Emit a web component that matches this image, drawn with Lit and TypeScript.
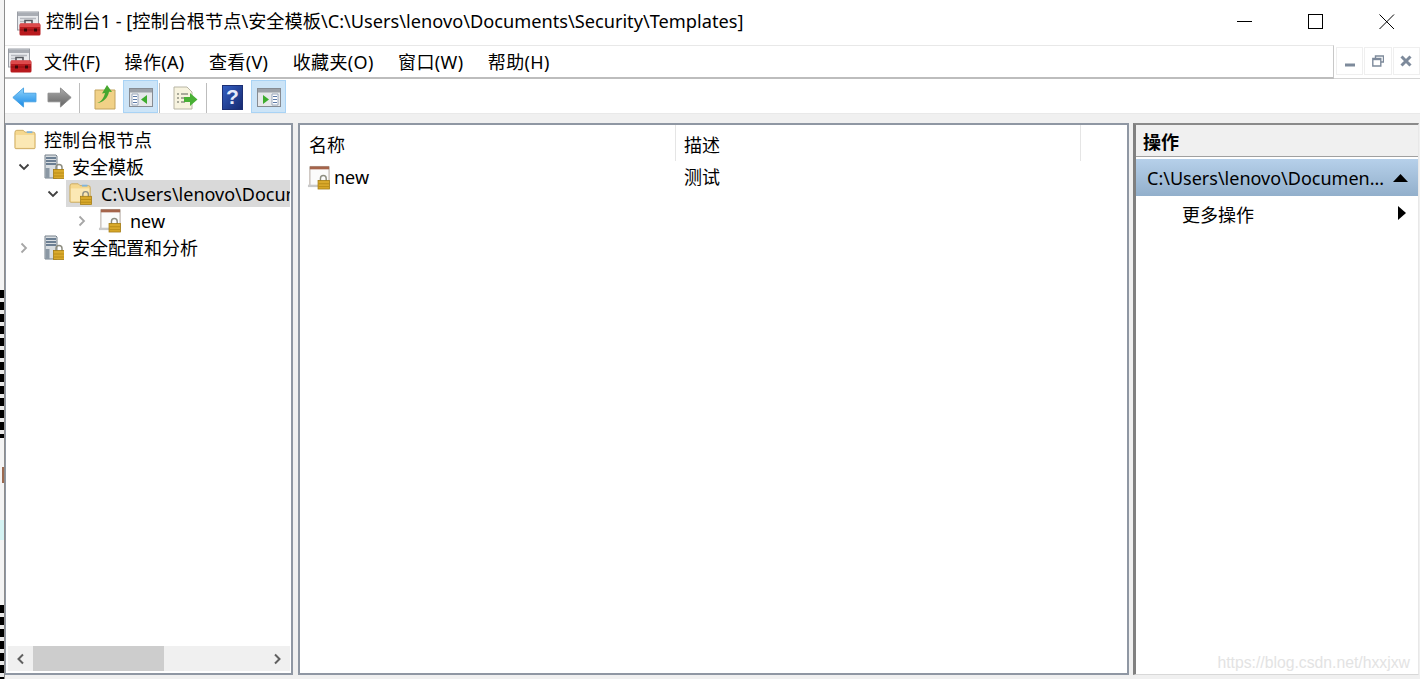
import { LitElement, css, html, svg } from 'lit';
import { customElement } from 'lit/decorators.js';

const toolbox = svg`
  <rect x="0.5" y="0.5" width="21" height="18" fill="#e9ebee" stroke="#9a9ea5"/>
  <rect x="1" y="1" width="20" height="3.5" fill="#a9adb4"/>
  <path d="M3 7h16M3 10h5M3 13h5" stroke="#b6b9bf" stroke-width="1.5"/>
  <path d="M8 12V9h7v3" fill="none" stroke="#55585e" stroke-width="1.6"/>
  <rect x="2.5" y="12" width="21" height="12" rx="1.5" fill="#b81a1e"/>
  <rect x="3" y="12" width="20" height="3.5" fill="#dd4a4c"/>
  <rect x="3" y="18" width="20" height="1" fill="#8e0f13"/>
  <rect x="7" y="17" width="3" height="3" fill="#3b0a0a"/>
  <rect x="17" y="17" width="3" height="3" fill="#3b0a0a"/>
`;

const lock = (x: number, y: number) => svg`
  <g transform="translate(${x} ${y})">
    <path d="M3 6.5V3.5a3 3 0 0 1 6 0V6.5" fill="none" stroke="#8d8d80" stroke-width="1.5"/>
    <rect x="0.5" y="5.5" width="12" height="9" fill="#d9a92b" stroke="#a27a12" stroke-width="0.8"/>
    <path d="M1 9h11M1 12h11" stroke="#b98c18"/>
  </g>
`;

const folderShape = svg`
  <path d="M1 21V4.5Q1 2 3 2h7l2 2h9q2 0 2 2v15q0 1-1 1H2q-1 0-1-1z" fill="#f6d88e" stroke="#c9a95f"/>
  <path d="M2 7h20v14H2z" fill="#fbe8b4"/>
  <rect x="14" y="3" width="6" height="2" fill="#7fb4dc"/>
`;

const server = svg`
  <g>
    <path d="M1 1h11l1 1v22H1z" fill="#d8dde1" stroke="#76818b"/>
    <path d="M2 4h10M2 7h10M2 10h10" stroke="#48607a" stroke-width="1.5"/>
    <path d="M1.5 14h4v10h-4z" fill="#8b98a4"/>
    ${lock(9, 10)}
  </g>
`;

const template = svg`
  <g>
    <path d="M3 1h20v20H3z" fill="#fbfbfb" stroke="#b0a49c"/>
    <path d="M3 1h20v3H3z" fill="#a5644a"/>
    <path d="M1 20h12v2.5H1z" fill="#c9c9c9"/>
    ${lock(11, 10)}
  </g>
`;

const panelIcon = (dir: 'left' | 'right') => svg`
  <rect x="0.5" y="0.5" width="23" height="18" fill="#e6e8ea" stroke="#868b92"/>
  <rect x="1" y="1" width="22" height="3.5" fill="#9ca1a8"/>
  ${dir === 'left'
    ? svg`<path d="M3 6h6v11H3z" fill="#fff" stroke="#9aa8bb"/><path d="M4 8.5h4M4 11.5h4M4 14.5h4" stroke="#5c7aa8"/><path d="M18 7v9l-6-4.5z" fill="#3dac2e"/>`
    : svg`<path d="M15 6h6v11h-6z" fill="#fff" stroke="#9aa8bb"/><path d="M16 8.5h4M16 11.5h4M16 14.5h4" stroke="#5c7aa8"/><path d="M6 7v9l6-4.5z" fill="#3dac2e"/>`}
`;

const treeRows = [
  { depth: 0, twist: '', icon: 'folder', label: '控制台根节点' },
  { depth: 1, twist: 'open', icon: 'server', label: '安全模板' },
  { depth: 2, twist: 'open', icon: 'lockfolder', label: 'C:\\Users\\lenovo\\Documents', selected: true },
  { depth: 3, twist: 'closed', icon: 'template', label: 'new' },
  { depth: 1, twist: 'closed', icon: 'server', label: '安全配置和分析' },
];

@customElement('app-root')
export class AppRoot extends LitElement {
  private _rowIcon(name: string) {
    if (name === 'folder') return html`<svg class="ico" viewBox="0 0 24 24">${folderShape}</svg>`;
    if (name === 'server') return html`<svg class="ico" viewBox="-4 0 24 25">${server}</svg>`;
    if (name === 'lockfolder') return html`<svg class="ico" viewBox="0 0 26 25">${folderShape}${lock(12, 10)}</svg>`;
    return html`<svg class="ico" viewBox="0 0 25 25">${template}</svg>`;
  }

  private _twist(kind: string) {
    if (kind === 'open') {
      return html`<svg class="twist" viewBox="0 0 12 12"><path d="M1.5 3.5 6 8l4.5-4.5" fill="none" stroke="#404040" stroke-width="1.8"/></svg>`;
    }
    if (kind === 'closed') {
      return html`<svg class="twist" viewBox="0 0 12 12"><path d="M3.5 1.5 8 6l-4.5 4.5" fill="none" stroke="#a6a6a6" stroke-width="1.8"/></svg>`;
    }
    return html``;
  }

  render() {
    return html`
      <div class="strip"></div>
      <div class="window">
        <div class="titlebar">
          <svg class="title-icon" viewBox="0 0 24 24">${toolbox}</svg>
          <span class="title-text">控制台1 - [控制台根节点\\安全模板\\C:\\Users\\lenovo\\Documents\\Security\\Templates]</span>
          <div class="caption">
            <svg viewBox="0 0 16 16"><path d="M0 7.5h15" stroke="#000"/></svg>
            <svg viewBox="0 0 16 16"><rect x="0.5" y="0.5" width="14" height="14" fill="none" stroke="#000"/></svg>
            <svg viewBox="0 0 16 16"><path d="M.5.5l14.5 14.5M15 .5.5 15" stroke="#000" fill="none"/></svg>
          </div>
        </div>

        <div class="menu-row">
          <div class="menubar">
            <svg class="menu-icon" viewBox="0 0 24 24">${toolbox}</svg>
            <span class="mi first">文件(F)</span>
            <span class="mi">操作(A)</span>
            <span class="mi">查看(V)</span>
            <span class="mi">收藏夹(O)</span>
            <span class="mi">窗口(W)</span>
            <span class="mi">帮助(H)</span>
          </div>
          <div class="mdi">
            <span class="mdi-btn"><svg viewBox="0 0 12 12"><path d="M1 10h10" stroke="#7d8a9b" stroke-width="3"/></svg></span>
            <span class="mdi-btn"><svg viewBox="0 0 12 12"><path d="M3.5 3V1h8v6H9M.8 3.5h8V11H.8z" fill="none" stroke="#7d8a9b" stroke-width="1.4"/><path d="M1 4.2h8" stroke="#7d8a9b" stroke-width="2"/></svg></span>
            <span class="mdi-btn"><svg viewBox="0 0 12 12"><path d="M1.5 1.5l9 9M10.5 1.5l-9 9" stroke="#7d8a9b" stroke-width="3"/></svg></span>
          </div>
        </div>

        <div class="toolbar">
          <svg class="arrow" viewBox="0 0 26 22">
            <defs><linearGradient id="blue" x1="0" y1="0" x2="0" y2="1"><stop offset="0" stop-color="#93d6fc"/><stop offset="1" stop-color="#1587e6"/></linearGradient></defs>
            <path d="M0.8 11 12 1v5.5h13v9H12V21z" fill="url(#blue)" stroke="#47a2e2"/>
          </svg>
          <svg class="arrow fwd" viewBox="0 0 26 22">
            <defs><linearGradient id="gray" x1="0" y1="0" x2="0" y2="1"><stop offset="0" stop-color="#ababab"/><stop offset="1" stop-color="#636363"/></linearGradient></defs>
            <path d="M25.2 11 14 1v5.5H1v9h13V21z" fill="url(#gray)" stroke="#8a8a8a"/>
          </svg>
          <span class="sep s1"></span>
          <svg class="up" viewBox="0 0 22 26">
            <path d="M1 6h20v19H1z" fill="#f1d187" stroke="#c3a35c"/>
            <path d="M3 19c4-1 7-5 8-10l-3 .5L13 1l5 7-3-.2c-1 6-6 11-12 11.2z" fill="#47a72f"/>
          </svg>
          <span class="tb-active a1"><svg class="panel" viewBox="0 0 24 19">${panelIcon('left')}</svg></span>
          <span class="sep s2"></span>
          <svg class="doc" viewBox="0 0 25 24">
            <path d="M1 1h13l5 5v17H1z" fill="#f7f3df" stroke="#b8b5a4"/>
            <path d="M4 8h2M8 8h7M4 12h2M8 12h4M4 16h2M8 16h4" stroke="#5f6358" stroke-width="1.2"/>
            <path d="M11 11h6V7l7.5 6.5L17 20v-4h-6z" fill="#49b035"/>
          </svg>
          <span class="sep s3"></span>
          <svg class="help" viewBox="0 0 21 25">
            <defs><linearGradient id="hb" x1="0" y1="0" x2="1" y2="1"><stop offset="0" stop-color="#3460c4"/><stop offset="1" stop-color="#16286e"/></linearGradient></defs>
            <rect x="0.5" y="0.5" width="20" height="24" fill="url(#hb)" stroke="#1c2f74"/>
            <text x="10.5" y="19" text-anchor="middle" class="q">?</text>
          </svg>
          <span class="tb-active a2"><svg class="panel" viewBox="0 0 24 19">${panelIcon('right')}</svg></span>
        </div>

        <div class="panes">
          <section class="pane tree">
            <div class="tree-body">
              ${treeRows.map(
                (r) => html`
                  <div class="row ${r.depth === 0 ? 'root' : ''}" style="padding-left:${r.depth === 0 ? 5 : (r.depth - 1) * 29 + 12}px">
                    ${this._twist(r.twist)}
                    <span class="cell ${r.selected ? 'sel' : ''}">
                      ${this._rowIcon(r.icon)}
                      <span class="lbl">${r.label}</span>
                    </span>
                  </div>
                `,
              )}
            </div>
            <div class="hscroll">
              <svg class="sarrow" viewBox="0 0 10 12"><path d="M7.5 1.5 3 6l4.5 4.5" fill="none" stroke="#606060" stroke-width="2"/></svg>
              <div class="track"><div class="thumb"></div></div>
              <svg class="sarrow" viewBox="0 0 10 12"><path d="M2.5 1.5 7 6l-4.5 4.5" fill="none" stroke="#606060" stroke-width="2"/></svg>
            </div>
          </section>

          <section class="pane list">
            <div class="list-head">
              <span class="col c1">名称</span>
              <span class="col c2">描述</span>
            </div>
            <div class="list-row">
              <div class="c1 name-cell"><svg class="ico" viewBox="0 0 25 25">${template}</svg><span>new</span></div>
              <div class="c2">测试</div>
            </div>
          </section>

          <section class="pane actions">
            <div class="act-head">操作</div>
            <div class="act-group">
              <span>C:\\Users\\lenovo\\Documen...</span>
              <svg class="tri-up" viewBox="0 0 15 8"><path d="M0 8 7.5 0 15 8z" fill="#000"/></svg>
            </div>
            <div class="act-item">
              <span>更多操作</span>
              <svg class="tri-right" viewBox="0 0 8 14"><path d="M0 0l8 7-8 7z" fill="#000"/></svg>
            </div>
            <div class="watermark">https://blog.csdn.net/hxxjxw</div>
          </section>
        </div>
      </div>
    `;
  }

  static styles = css`
    :host {
      display: flex;
      width: 1420px;
      height: 679px;
      overflow: hidden;
      background: #fff;
      color: #000;
      font-family: 'Noto Sans', 'Noto Sans CJK SC', sans-serif;
      font-size: 18px;
      line-height: 24px;
    }
    .strip {
      width: 4px;
      flex: none;
      background:
        repeating-linear-gradient(#000 0 8px, #e8e8e8 8px 12px) 0 290px / 4px 148px no-repeat,
        linear-gradient(#9c6a50, #9c6a50) 2px 467px / 2px 16px no-repeat,
        linear-gradient(#d5f3f3, #d5f3f3) 0 520px / 4px 20px no-repeat,
        repeating-linear-gradient(#000 0 8px, #e8e8e8 8px 12px) 0 605px / 4px 74px no-repeat,
        #f4f4f4;
    }
    .window {
      flex: 1;
      min-width: 0;
      display: flex;
      flex-direction: column;
      border-left: 1px solid #8d8d8d;
    }

    .titlebar {
      height: 45px;
      flex: none;
      display: flex;
      align-items: center;
      padding-left: 12px;
      background: #fff;
    }
    .title-icon {
      width: 24px;
      height: 25px;
      margin-right: 5px;
      margin-top: 1px;
    }
    .title-text {
      font-size: 18.2px;
      white-space: nowrap;
      margin-top: -4px;
    }
    .caption {
      margin-left: auto;
      display: flex;
      align-items: center;
      gap: 55px;
      padding-right: 25px;
      margin-top: -1px;
    }
    .caption svg {
      width: 16px;
      height: 16px;
      display: block;
    }

    .menu-row {
      height: 34px;
      flex: none;
      display: flex;
    }
    .menubar {
      width: 1329px;
      display: flex;
      align-items: center;
      border-top: 1px solid #e8e8e8;
      border-right: 1px solid #c8c8c8;
      border-bottom: 2px solid #bdbdbd;
      padding-left: 3px;
      box-sizing: border-box;
    }
    .menu-icon {
      width: 24px;
      height: 25px;
      flex: none;
      margin-top: -2px;
    }
    .mi {
      margin-left: 24.4px;
      white-space: nowrap;
      letter-spacing: 0.35px;
    }
    .mi.first {
      margin-left: 12px;
      letter-spacing: 0;
    }
    .mdi {
      flex: 1;
      display: flex;
      gap: 1px;
      padding: 2px 0 3px 2px;
      border-bottom: 1px solid #d5d5d5;
    }
    .mdi-btn {
      flex: 1;
      display: flex;
      align-items: center;
      justify-content: center;
      border: 1px solid #efefef;
    }
    .mdi-btn svg {
      width: 12px;
      height: 12px;
    }

    .toolbar {
      height: 34px;
      flex: none;
      display: flex;
      align-items: center;
      padding-left: 7px;
      background: #fff;
    }
    .arrow {
      width: 25px;
      height: 21px;
      flex: none;
      margin-top: 3px;
    }
    .arrow.fwd {
      margin-left: 10px;
    }
    .sep {
      width: 1px;
      height: 30px;
      flex: none;
      margin-top: 3px;
      background: #bdbdbd;
    }
    .s1 {
      margin-left: 7px;
    }
    .s2 {
      margin-left: 1px;
    }
    .s3 {
      margin-left: 8px;
    }
    .up {
      width: 22px;
      height: 26px;
      margin-left: 14px;
      margin-top: 2px;
      flex: none;
    }
    .tb-active {
      width: 33px;
      height: 28px;
      flex: none;
      display: flex;
      align-items: center;
      justify-content: center;
      padding-top: 3px;
      background: #cce4f7;
      border: 1px solid #a9d3f5;
    }
    .a1 {
      margin-left: 7px;
    }
    .a2 {
      margin-left: 8px;
    }
    .panel {
      width: 24px;
      height: 19px;
    }
    .doc {
      width: 25px;
      height: 24px;
      margin-left: 13px;
      margin-top: 3px;
      flex: none;
    }
    .help {
      width: 21px;
      height: 25px;
      margin-left: 15px;
      margin-top: 3px;
      flex: none;
    }
    .q {
      font: bold 21px 'Liberation Sans', sans-serif;
      fill: #e6ebfb;
    }

    .panes {
      flex: 1;
      min-height: 0;
      display: flex;
      background: #f0f0f0;
      border-top: 1px solid #e9e9e9;
      padding: 9px 0 4px 0;
      gap: 5px;
    }
    .pane {
      box-sizing: border-box;
      background: #fff;
      border: 2px solid #8f97a3;
      min-width: 0;
      display: flex;
      flex-direction: column;
    }
    .tree {
      width: 288px;
      flex: none;
      border-left-width: 1px;
    }
    .tree-body {
      flex: 1;
      padding-top: 1px;
      overflow: hidden;
    }
    .row {
      height: 27px;
      display: flex;
      align-items: center;
      white-space: nowrap;
    }
    .twist {
      width: 12px;
      height: 12px;
      flex: none;
      margin-right: 7px;
    }
    .cell {
      flex: 1;
      min-width: 0;
      height: 27px;
      display: flex;
      align-items: center;
      overflow: hidden;
      margin-right: 1px;
      padding-left: 3px;
    }
    .cell.sel {
      background: #d9d9d9;
    }
    .ico {
      width: 24px;
      height: 25px;
      flex: none;
      margin-right: 8px;
    }
    .row.root .ico {
      width: 22px;
    }
    .lbl {
      white-space: nowrap;
    }
    .hscroll {
      height: 25px;
      flex: none;
      display: flex;
      align-items: center;
      background: #f0f0f0;
      margin: 0 1px 2px 2px;
    }
    .sarrow {
      width: 25px;
      height: 12px;
      flex: none;
    }
    .track {
      flex: 1;
      align-self: stretch;
    }
    .thumb {
      width: 131px;
      height: 100%;
      background: #cdcdcd;
    }

    .list {
      width: 831px;
      flex: none;
    }
    .list-head {
      height: 36px;
      flex: none;
      display: flex;
      align-items: center;
    }
    .col {
      height: 100%;
      display: flex;
      align-items: center;
      padding-top: 3px;
      border-right: 1px solid #e5e5e5;
    }
    .c1 {
      width: 376px;
      flex: none;
      padding-left: 9px;
      box-sizing: border-box;
    }
    .c2 {
      width: 405px;
      flex: none;
      padding-left: 8px;
      box-sizing: border-box;
    }
    .list-row {
      height: 32px;
      display: flex;
      align-items: center;
    }
    .name-cell {
      display: flex;
      align-items: center;
      padding-left: 7px;
    }
    .name-cell .ico {
      margin-right: 3px;
    }

    .actions {
      flex: 1;
      margin: 0 1px 0 -1px;
      border-width: 2px 1px 1px 3px;
      border-color: #8a8a8a #e8e8e8 #d8d8d8 #808080;
      position: relative;
    }
    .act-head {
      height: 32px;
      flex: none;
      box-sizing: border-box;
      display: flex;
      align-items: center;
      padding: 2px 0 0 7px;
      background: #f0f0f0;
      border-bottom: 1px solid #a0a0a0;
      font-weight: 700;
    }
    .act-group {
      height: 37px;
      flex: none;
      margin-top: 2px;
      display: flex;
      align-items: center;
      justify-content: space-between;
      padding: 0 10px 0 11px;
      white-space: nowrap;
      background: linear-gradient(#b6d0ea, #92afcb);
    }
    .tri-up {
      width: 15px;
      height: 8px;
    }
    .act-item {
      height: 37px;
      display: flex;
      align-items: center;
      justify-content: space-between;
      padding: 0 12px 0 46px;
    }
    .tri-right {
      width: 8px;
      height: 14px;
      margin-top: -4px;
    }
    .watermark {
      position: absolute;
      right: 8px;
      bottom: 2px;
      font: 15.75px 'Liberation Sans', sans-serif;
      color: #e3e3e3;
    }
  `;
}

declare global {
  interface HTMLElementTagNameMap {
    'app-root': AppRoot;
  }
}
